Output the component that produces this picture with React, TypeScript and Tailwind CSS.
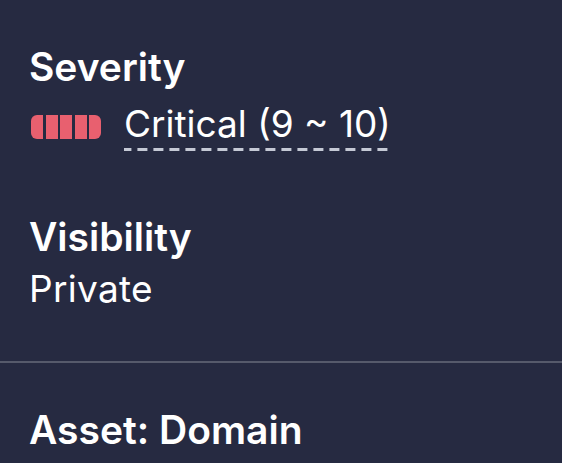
import React from "react";

export default function App() {
  return (
    <div
      className="w-[562px] h-[463px] bg-[#262a41] text-white overflow-hidden"
      style={{ fontFamily: "Inter, Lato, sans-serif" }}
    >
      <div className="pl-[29px] pt-[45px]">
        <div className="text-[39px] leading-[44px] font-semibold">Severity</div>
        <div className="flex items-center gap-[23px] mt-[13px]">
          <div className="flex gap-[2.5px] ml-[2px]">
            <div className="w-[12px] h-[24px] bg-[#e8606f] rounded-l-[6px]" />
            <div className="w-[12px] h-[24px] bg-[#e8606f]" />
            <div className="w-[12px] h-[24px] bg-[#e8606f]" />
            <div className="w-[12px] h-[24px] bg-[#e8606f]" />
            <div className="w-[12px] h-[24px] bg-[#e8606f] rounded-r-[6px]" />
          </div>
          <div className="text-[37px] leading-[44px] pb-[5px] bg-[linear-gradient(to_right,#c5c9d5_10px,transparent_10px)] bg-[length:16px_3px] bg-bottom bg-repeat-x">
            Critical (9 ~ 10)
          </div>
        </div>
        <div className="text-[39px] leading-[44px] font-semibold mt-[64px]">Visibility</div>
        <div className="text-[37px] leading-[44px] tracking-[0.3px] mt-[8px]">Private</div>
      </div>
      <div className="h-[2px] bg-[#565a6b] mt-[50px]" />
      <div className="pl-[29px] pt-[45px]">
        <div className="text-[39px] leading-[44px] font-semibold">Asset: Domain</div>
      </div>
    </div>
  );
}
